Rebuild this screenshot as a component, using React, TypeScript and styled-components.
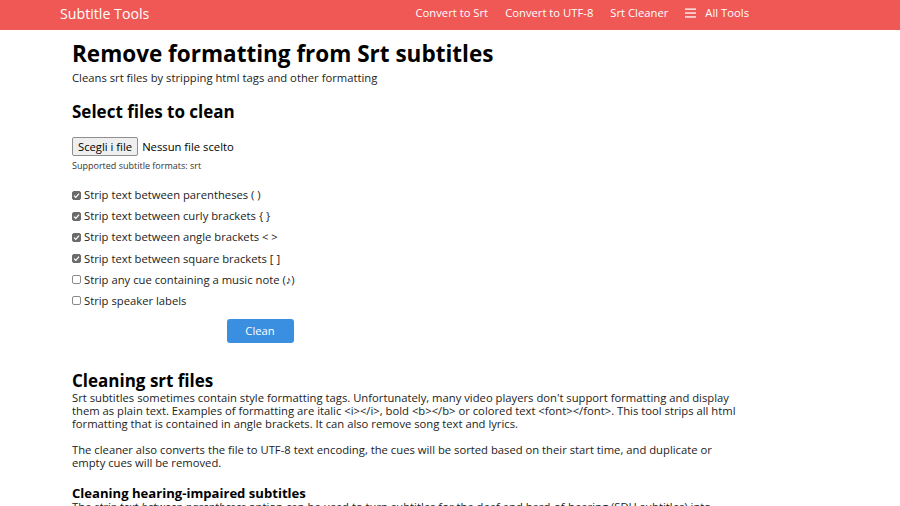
import React from "react";
import styled, { createGlobalStyle } from "styled-components";

const GlobalStyle = createGlobalStyle`
  body {
    margin: 0;
    background: #ffffff;
    font-family: "Open Sans", "Noto Sans", sans-serif;
    color: #222222;
  }
`;

const Header = styled.header`
  box-sizing: border-box;
  height: 30px;
  background-color: #ef5855;
  display: flex;
  align-items: center;
  padding: 0 151px 3px 60px;
  color: #ffffff;
`;

const Brand = styled.a`
  font-size: 14.2px;
  color: #ffffff;
  text-decoration: none;
`;

const Nav = styled.nav`
  margin-left: auto;
  padding-bottom: 2px;
  display: flex;
  align-items: center;
  gap: 17px;
`;

const NavLink = styled.a`
  font-size: 11.25px;
  color: #ffffff;
  text-decoration: none;
  display: flex;
  align-items: center;
  gap: 9px;
`;

const Main = styled.main`
  padding-left: 72px;
  width: 670px;
`;

const Title = styled.h1`
  font-size: 22.5px;
  font-weight: 700;
  color: #000000;
  margin: 9px 0 0;
  line-height: 30px;
`;

const Lead = styled.p`
  font-size: 11.25px;
  margin: 1px 0 0;
  line-height: 16px;
`;

const SectionTitle = styled.h2<{ $top: number }>`
  font-size: 17px;
  font-weight: 700;
  color: #000000;
  margin: ${(p) => p.$top}px 0 0;
  line-height: 20px;
`;

const Form = styled.form`
  width: 376px;
  display: flex;
  flex-direction: column;
`;

const FileRow = styled.div`
  display: flex;
  align-items: center;
  margin-top: 15px;
  font-size: 11.25px;
`;

const FileButton = styled.span`
  font-size: 11.25px;
  padding: 0 5px;
  height: 17px;
  line-height: 17px;
  border: 1px solid #8f8f8f;
  border-radius: 2px;
  background: #efefef;
  color: #000000;
`;

const FileName = styled.span`
  margin-left: 4px;
  color: #000000;
`;

const Hint = styled.small`
  font-size: 9px;
  line-height: 12px;
  margin-top: 4px;
  color: #333333;
`;

const Options = styled.div`
  display: flex;
  flex-direction: column;
  margin-top: 16px;
  gap: 7.2px;
`;

const Option = styled.label`
  display: flex;
  align-items: center;
  font-size: 11.25px;
  line-height: 14px;
`;

const Box = styled.span<{ $on: boolean }>`
  width: 9px;
  height: 9px;
  border-radius: 2px;
  margin-right: 3px;
  box-sizing: border-box;
  border: 1px solid ${(p) => (p.$on ? "#6b6b6b" : "#8a8a8a")};
  background: ${(p) => (p.$on ? "#6b6b6b" : "#ffffff")};
  display: flex;
  align-items: center;
  justify-content: center;
`;

const CleanButton = styled.button`
  align-self: center;
  margin-top: 11px;
  width: 67px;
  height: 24px;
  background: #3b8fe0;
  border: none;
  border-radius: 3px;
  color: #ffffff;
  font-family: "Open Sans", sans-serif;
  font-size: 11.25px;
`;

const Text = styled.p`
  font-size: 11.25px;
  line-height: 13px;
  margin: 0 0 13px;
`;

const SubTitle = styled.h3`
  font-size: 13.1px;
  font-weight: 700;
  color: #000000;
  margin: 17px 0 0;
  line-height: 14px;
`;

const Check = () => (
  <svg width="7" height="7" viewBox="0 0 10 10">
    <path d="M1.5 5.2 L4 7.6 L8.6 2.2" stroke="#fff" strokeWidth="1.8" fill="none" />
  </svg>
);

const options = [
  { label: "Strip text between parentheses ( )", on: true },
  { label: "Strip text between curly brackets { }", on: true },
  { label: "Strip text between angle brackets < >", on: true },
  { label: "Strip text between square brackets [ ]", on: true },
  { label: "Strip any cue containing a music note (\u266A)", on: false },
  { label: "Strip speaker labels", on: false },
];

export default function App() {
  return (
    <>
      <GlobalStyle />
      <Header>
        <Brand href="#">Subtitle Tools</Brand>
        <Nav>
          <NavLink href="#">Convert to Srt</NavLink>
          <NavLink href="#">Convert to UTF-8</NavLink>
          <NavLink href="#">Srt Cleaner</NavLink>
          <NavLink href="#">
            <svg width="11" height="10" viewBox="0 0 11 10">
              <rect x="0" y="0.5" width="11" height="1.3" fill="#fff" />
              <rect x="0" y="4.4" width="11" height="1.3" fill="#fff" />
              <rect x="0" y="8.3" width="11" height="1.3" fill="#fff" />
            </svg>
            All Tools
          </NavLink>
        </Nav>
      </Header>
      <Main>
        <Title>Remove formatting from Srt subtitles</Title>
        <Lead>Cleans srt files by stripping html tags and other formatting</Lead>
        <SectionTitle $top={16}>Select files to clean</SectionTitle>
        <Form>
          <FileRow>
            <FileButton>Scegli i file</FileButton>
            <FileName>Nessun file scelto</FileName>
          </FileRow>
          <Hint>Supported subtitle formats: srt</Hint>
          <Options>
            {options.map((o) => (
              <Option key={o.label}>
                <Box $on={o.on}>{o.on && <Check />}</Box>
                {o.label}
              </Option>
            ))}
          </Options>
          <CleanButton type="button">Clean</CleanButton>
        </Form>
        <SectionTitle $top={28}>Cleaning srt files</SectionTitle>
        <Text>
          Srt subtitles sometimes contain style formatting tags. Unfortunately, many video players
          don't support formatting and display them as plain text. Examples of formatting are italic
          &lt;i&gt;&lt;/i&gt;, bold &lt;b&gt;&lt;/b&gt; or colored text &lt;font&gt;&lt;/font&gt;. This
          tool strips all html formatting that is contained in angle brackets. It can also remove song
          text and lyrics.
        </Text>
        <Text>
          The cleaner also converts the file to UTF-8 text encoding, the cues will be sorted based on
          their start time, and duplicate or empty cues will be removed.
        </Text>
        <SubTitle>Cleaning hearing-impaired subtitles</SubTitle>
        <Text>
          The <em>strip text between parentheses</em> option can be used to turn subtitles for the deaf
          and hard-of-hearing (SDH subtitles) into regular subtitles.
        </Text>
      </Main>
    </>
  );
}
